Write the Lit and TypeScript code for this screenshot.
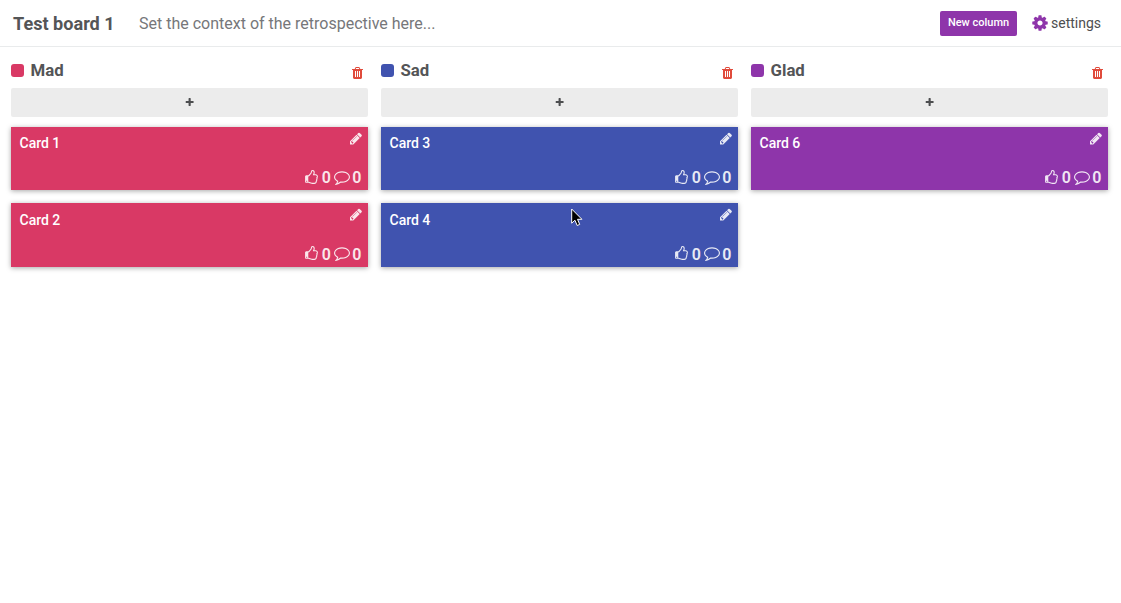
import { LitElement, html, css, svg } from "lit";
import { customElement, property } from "lit/decorators.js";

const ICONS = {
  cog: "M1152 896q0-106-75-181t-181-75-181 75-75 181 75 181 181 75 181-75 75-181zm512-109v222q0 12-8 23t-20 13l-185 28q-19 54-39 91 35 50 107 138 10 12 10 25t-9 23q-27 37-99 108t-94 71q-12 0-26-9l-138-108q-44 23-91 38-16 136-29 186-7 28-36 28h-222q-14 0-24.5-8.5t-11.5-21.5l-28-184q-49-16-90-37l-141 107q-10 9-25 9-14 0-25-11-126-114-165-168-7-10-7-23 0-12 8-23 15-21 51-66.5t54-70.5q-27-50-41-99l-183-27q-13-2-21-12.5t-8-23.5v-222q0-12 8-23t19-13l186-28q14-46 39-92-40-57-107-138-10-12-10-24 0-10 9-23 26-36 98.5-107.5t94.5-71.5q13 0 26 10l138 107q44-23 91-38 16-136 29-186 7-28 36-28h222q14 0 24.5 8.5t11.5 21.5l28 184q49 16 90 37l142-107q9-9 24-9 13 0 25 10 129 119 165 170 7 8 7 22 0 12-8 23-15 21-51 66.5t-54 70.5q26 50 41 98l183 28q13 2 21 12.5t8 23.5z",
  trash: "M704 1376v-704q0-14-9-23t-23-9h-64q-14 0-23 9t-9 23v704q0 14 9 23t23 9h64q14 0 23-9t9-23zm256 0v-704q0-14-9-23t-23-9h-64q-14 0-23 9t-9 23v704q0 14 9 23t23 9h64q14 0 23-9t9-23zm256 0v-704q0-14-9-23t-23-9h-64q-14 0-23 9t-9 23v704q0 14 9 23t23 9h64q14 0 23-9t9-23zm-544-992h448l-48-117q-7-9-17-11h-317q-10 2-17 11zm928 32v64q0 14-9 23t-23 9h-96v948q0 83-47 143.5t-113 60.5h-832q-66 0-113-58.5t-47-141.5v-952h-96q-14 0-23-9t-9-23v-64q0-14 9-23t23-9h309l70-167q15-37 54-63t79-26h320q40 0 79 26t54 63l70 167h309q14 0 23 9t9 23z",
  pencil: "M491 1536l91-91-235-235-91 91v107h128v128h107zm523-928q0-22-22-22-10 0-17 7l-542 542q-7 7-7 17 0 22 22 22 10 0 17-7l542-542q7-7 7-17zm-54-192l416 416-832 832h-416v-416zm683 96q0 53-37 90l-166 166-416-416 166-165q36-38 90-38 53 0 91 38l235 234q37 39 37 91z",
  plus: "M1600 736v192q0 40-28 68t-68 28h-416v416q0 40-28 68t-68 28h-192q-40 0-68-28t-28-68v-416h-416q-40 0-68-28t-28-68v-192q0-40 28-68t68-28h416v-416q0-40 28-68t68-28h192q40 0 68 28t28 68v416h416q40 0 68 28t28 68z",
  thumb: "M384 1344q0-26-19-45t-45-19-45 19-19 45 19 45 45 19 45-19 19-45zm1152-576q0-51-39-89.5t-89-38.5h-352q0-58 48-159.5t48-160.5q0-98-32-145t-128-47q-26 26-38 85t-30.5 125.5-59.5 109.5q-22 23-77 91-4 5-23 30t-31.5 41-34.5 42.5-40 44-38.5 35.5-40 27-35.5 9h-32v640h32q13 0 31.5 3t33 6.5 38 11 35 11.5 35.5 12.5 29 10.5q211 73 342 73h121q192 0 192-167 0-26-5-56 30-16 47.5-52.5t17.5-73.5-18-69q53-50 53-119 0-25-10-55.5t-25-47.5q32-1 53.5-47t21.5-81zm128-1q0 89-49 163 9 33 9 69 0 77-38 144 3 21 3 43 0 101-60 178 1 139-85 219.5t-227 80.5h-129q-96 0-189.5-22.5t-216.5-65.5q-116-40-138-40h-288q-53 0-90.5-37.5t-37.5-90.5v-640q0-53 37.5-90.5t90.5-37.5h274q36-24 137-155 58-75 107-128 24-25 35.5-85.5t30.5-126.5 62-108q39-37 90-37 84 0 151 32.5t102 101.5 35 186q0 93-48 192h176q104 0 180 76t76 179z",
  comment: "M896 384q-204 0-381.5 69.5t-282 187.5-104.5 255q0 112 71.5 213.5t201.5 175.5l87 50-27 96q-24 91-70 172 152-63 275-171l43-38 57 6q69 8 130 8 204 0 381.5-69.5t282-187.5 104.5-255-104.5-255-282-187.5-381.5-69.5zm896 512q0 174-120 321.5t-326 233-450 85.5q-70 0-145-8-198 175-460 242-49 14-114 22h-5q-15 0-27-10.5t-16-27.5v-1q-3-4-.5-12t2-10 4.5-9.5l6-9 7-8.5 8-9q7-8 31-34.5t34.5-38 31-39.5 32.5-51 27-59 26-76q-157-89-247.5-220t-90.5-281q0-174 120-321.5t326-233 450-85.5 450 85.5 326 233 120 321.5z",
};

type IconName = keyof typeof ICONS;

const icon = (name: IconName) => html`
  <svg class="icon ${name}" viewBox="0 0 1792 1792" aria-hidden="true">${svg`<path d=${ICONS[name]} />`}</svg>`;

interface Card {
  text: string;
  likes: number;
  comments: number;
}

interface Column {
  title: string;
  color: string;
  cards: Card[];
}

const card = (text: string): Card => ({ text, likes: 0, comments: 0 });

const COLUMNS: Column[] = [
  { title: "Mad", color: "#d93965", cards: [card("Card 1"), card("Card 2")] },
  { title: "Sad", color: "#4053af", cards: [card("Card 3"), card("Card 4")] },
  { title: "Glad", color: "#8e35aa", cards: [card("Card 6")] },
];

@customElement("board-card")
export class BoardCard extends LitElement {
  @property({ attribute: false }) card!: Card;

  static styles = css`
    :host {
      box-sizing: border-box;
      height: 63.45px;
      display: flex;
      flex-direction: column;
      justify-content: space-between;
      padding: 5px 6.5px 3.05px 8.5px;
      color: #fff;
      box-shadow: 0 1px 5px rgba(0, 0, 0, 0.35);
    }
    .top, .counts { display: flex; }
    .top { justify-content: space-between; }
    .text { font-size: 14px; font-weight: 500; line-height: 22px; padding-top: 0.4px; }
    .icon { display: block; fill: currentColor; opacity: 0.88; }
    .pencil { width: 14px; height: 14px; margin-right: -1.5px; }
    .pencil path { transform: translateY(-64px); }
    .counts {
      justify-content: flex-end;
      align-items: center;
      height: 18px;
      font-size: 16px;
      font-weight: 600;
      line-height: 18px;
    }
    .count { opacity: 0.88; }
    .thumb { width: 15px; height: 15px; margin: 0 3px 2px 0; }
    .comment { width: 16px; height: 16px; margin: 0 2.5px 3px 3px; }
  `;

  render() {
    return html`
      <div class="top"><span class="text">${this.card.text}</span>${icon("pencil")}</div>
      <div class="counts">
        ${icon("thumb")}<span class="count">${this.card.likes}</span>
        ${icon("comment")}<span class="count">${this.card.comments}</span>
      </div>
    `;
  }
}

@customElement("board-column")
export class BoardColumn extends LitElement {
  @property({ attribute: false }) column!: Column;

  static styles = css`
    :host { display: block; min-width: 0; }
    .head { display: flex; align-items: center; height: 24px; padding-right: 4px; }
    .swatch { width: 13px; height: 13px; border-radius: 3px; margin-right: 6.5px; }
    .title { flex: 1; margin: 0; font-size: 16.8px; line-height: 24px; font-weight: 700; color: #545557; }
    .icon { display: block; fill: currentColor; }
    .trash { width: 14px; height: 14px; color: #e04b3c; margin-top: 6px; }
    .trash path { transform: translateX(64px); }
    .add {
      display: flex;
      align-items: center;
      justify-content: center;
      width: 100%;
      height: 29px;
      margin: 6px 0 10px;
      padding: 0 0 1px;
      border: 0;
      border-radius: 2px;
      background: #ececec;
      color: #4d4e50;
    }
    .plus { width: 10px; height: 10px; }
    .plus path { transform: translate(-64px, 64px); }
    .cards { display: grid; gap: 13px; }
    .card { background: var(--card-color); }
  `;

  render() {
    const { title, color, cards } = this.column;
    return html`
      <div class="head">
        <span class="swatch" style="background:${color}"></span>
        <h2 class="title">${title}</h2>
        ${icon("trash")}
      </div>
      <button class="add" aria-label="Add card">${icon("plus")}</button>
      <div class="cards" style="--card-color:${color}">
        ${cards.map((c) => html`<board-card class="card" .card=${c}></board-card>`)}
      </div>
    `;
  }
}

@customElement("app-root")
export class AppRoot extends LitElement {
  static styles = css`
    :host {
      display: block;
      position: relative;
      height: 603px;
      overflow: hidden;
      background: #fff;
      font-family: Roboto, "Liberation Sans", sans-serif;
      color: #545557;
    }
    .bar {
      box-sizing: border-box;
      height: 47px;
      display: flex;
      align-items: center;
      padding: 0 20px 0 13px;
      border-bottom: 1px solid #e9ebec;
    }
    .name { margin: 0; width: 126px; font-size: 18.1px; font-weight: 700; line-height: 24px; padding-top: 1px; }
    .context { flex: 1; font-size: 16px; color: #76777a; }
    .new {
      height: 25px;
      width: 77px;
      padding: 0 0 2px;
      border: 0;
      border-radius: 2px;
      background: #8e35aa;
      color: #fff;
      font: 500 11px/23px Roboto, "Liberation Sans", sans-serif;
      white-space: nowrap;
    }
    .settings {
      display: flex;
      align-items: center;
      width: 70px;
      margin-left: 14px;
      font-size: 14px;
      color: #4d4e50;
    }
    .icon { display: block; fill: #8e35aa; }
    .cog { flex: none; width: 18px; height: 18px; margin-right: 2px; }
    .columns { display: grid; grid-template-columns: repeat(3, 357px); gap: 13px; padding: 11px 11px 0; }
    .pointer { position: absolute; left: 571px; top: 208px; width: 12px; height: 19px; }
  `;

  render() {
    return html`
      <header class="bar">
        <h1 class="name">Test board 1</h1>
        <span class="context">Set the context of the retrospective here...</span>
        <button class="new">New column</button>
        <span class="settings">${icon("cog")}settings</span>
      </header>
      <main class="columns">
        ${COLUMNS.map((c) => html`<board-column .column=${c}></board-column>`)}
      </main>
      <svg class="pointer" viewBox="0 0 12 19" aria-hidden="true">
        <path d="M.7 1v14.2l3.2-3 2.3 5.3 2.5-1.1-2.2-5.1h4.4z" fill="#000" stroke="#fff" stroke-width="1" />
      </svg>
    `;
  }
}
